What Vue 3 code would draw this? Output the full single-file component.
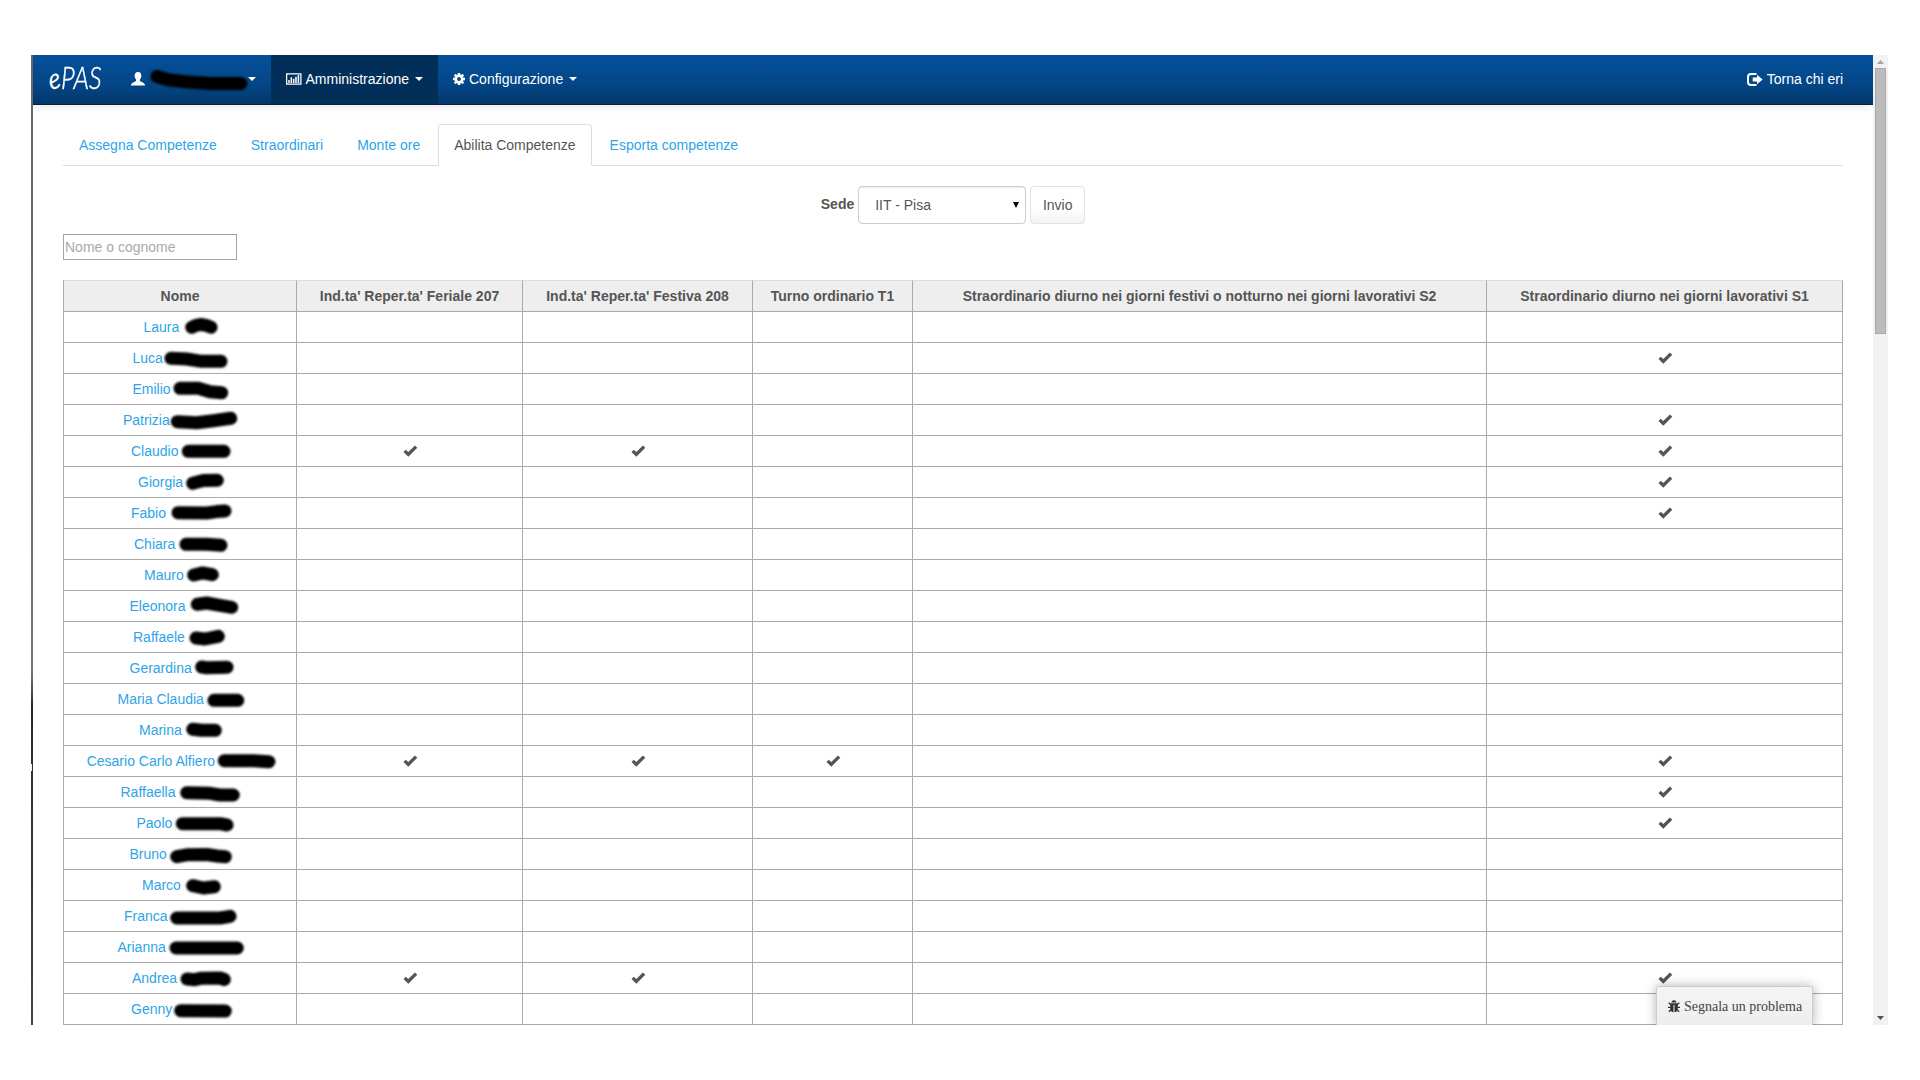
<script setup>
const tabs = ['Assegna Competenze', 'Straordinari', 'Monte ore', 'Abilita Competenze', 'Esporta competenze']

const columns = [
  { label: 'Nome', width: 233 },
  { label: "Ind.ta' Reper.ta' Feriale 207", width: 226 },
  { label: "Ind.ta' Reper.ta' Festiva 208", width: 230 },
  { label: 'Turno ordinario T1', width: 160 },
  { label: 'Straordinario diurno nei giorni festivi o notturno nei giorni lavorativi S2', width: 574 },
  { label: 'Straordinario diurno nei giorni lavorativi S1', width: 356 }
]

// name, indent of the name, marker stroke over the surname, enabled columns
const people = [
  ['Laura', 79.5, '127.7,15.3 132,13.3 137,12.5 142,13.3 147,15.3', []],
  ['Luca', 68.5, '107,15.3 122.7,16 137.7,18.3 157,18.3', [5]],
  ['Emilio', 68.5, '116,14.3 134.3,14.3 146,17.7 157.7,18.7', []],
  ['Patrizia', 59, '113.3,16.7 132.7,17.7 149.3,15.7 166.7,13.3', [5]],
  ['Claudio', 67, '124.3,15.3 160,15.3', [1, 2, 5]],
  ['Giorgia', 74, '128.7,16.3 139.3,13.5 153.3,13.3', [5]],
  ['Fabio', 67, '114,14.7 142.7,15 152.7,13.6 161,13', [5]],
  ['Chiara', 70, '122,15.3 142.7,15.3 157,16.3', []],
  ['Mauro', 80, '129.7,15 138.7,12.9 148.3,14.7', []],
  ['Eleonora', 65.500, '133.3,13.3 142.7,12 156,14.3 167.7,16.3', []],
  ['Raffaele', 69, '132,16 141,17 154.3,14.3', []],
  ['Gerardina', 65.500, '137.7,14 142.7,14.7 163,14.3', []],
  ['Maria Claudia', 53.500, '150,16.3 173.7,16.3', []],
  ['Marina', 75, '128.7,14.3 137.7,15.3 151.3,15.3', []],
  ['Cesario Carlo Alfiero', 22.700, '160.3,14.7 189.3,14.7 205,15.7', [1, 2, 3, 5]],
  ['Raffaella', 56.500, '122.7,15.7 146,16.3 156,18 169.3,18', [5]],
  ['Paolo', 72.500, '118.3,15.7 156,15.7 163,17', [5]],
  ['Bruno', 65.500, '112.7,17.7 122.7,15.8 142.7,15.5 152.7,17 161.3,17.7', []],
  ['Marco', 78, '128.7,15.7 139.3,18 150.3,16.7', []],
  ['Franca', 60, '112.7,17 156,17 166,15.3', []],
  ['Arianna', 53.500, '112,16 173.3,16', []],
  ['Andrea', 68, '123,16 131,16.7 137.7,15.2 156,15 160.3,16.5', [1, 2, 5]],
  ['Genny', 67, '116.7,16.7 161.3,17', []]
].map(([name, indent, stroke, enabled]) => ({ name, indent, stroke, enabled }))
</script>

<template>
  <div class="window">
    <div class="edge"><i></i></div>
    <div class="page">
      <nav class="navbar">
        <a class="brand"><span>e</span><b>PAS</b></a>
        <a class="nav-item user">
          <svg width="14" height="14" viewBox="0 0 14 14"><path fill="#fff" d="M7 0C9.500 0 10.500 1.700 10.300 4C10.200 5.800 9.600 6.600 9 7.400V9C9.800 10 14 10.400 14 13.500H0C0 10.400 4.200 10 5 9V7.400C4.400 6.600 3.800 5.800 3.700 4C3.500 1.700 4.500 0 7 0Z" /></svg>
          <span class="username"><svg width="104" height="24" viewBox="0 0 104 24"><polyline points="12,9.500 24,13 43,15 65,16.500 96,16.500" /></svg></span>
          <i class="caret"></i>
        </a>
        <a class="nav-item active">
          <svg class="chart" width="16" height="12" viewBox="0 0 16 12"><path fill="none" stroke="#fff" stroke-width="1.3" d="M.65.65h14.7v10.7H.65z" /><path fill="#fff" d="M2.3 7h1.5v3H2.3zM4.7 4.2h1.6V10H4.7zM7.2 5.8h1.5V10H7.2zM9.5 3.6h1.6V10H9.5zM12 2h1.6v8H12z" /></svg>
          <span>Amministrazione</span><i class="caret"></i>
        </a>
        <a class="nav-item">
          <svg class="gear" width="12" height="12" viewBox="0 0 12 12"><g fill="none" stroke="#fff"><circle cx="6" cy="6" r="3.2" stroke-width="2.6" /><path stroke-width="2.6" d="M6 0v2.3M6 9.700v2.3M0 6h2.300M9.700 6H12M1.700 1.700l1.700 1.700M8.600 8.600l1.700 1.700M10.300 1.700L8.600 3.400M3.400 8.600l-1.700 1.700" /></g></svg>
          <span>Configurazione</span><i class="caret"></i>
        </a>
        <a class="nav-item back">
          <svg width="16" height="13" viewBox="0 0 16 13"><path fill="none" stroke="#fff" stroke-width="2" d="M9.500 1H4Q1 1 1 4v5Q1 12 4 12h5.500" /><path fill="#fff" d="M5.700 4.500H10V1.700L15.600 6.500L10 11.300V8.500H5.700z" /></svg>
          <span>Torna chi eri</span>
        </a>
      </nav>

      <main class="content">
        <ul class="tabs">
          <li v-for="tab in tabs" :key="tab" :class="{ active: tab === 'Abilita Competenze' }">{{ tab }}</li>
        </ul>
        <form class="office" @submit.prevent>
          <label>Sede</label>
          <div class="select"><span>IIT - Pisa</span><svg width="6" height="6" viewBox="0 0 6 6"><path d="M0 0h6L3 6z" /></svg></div>
          <button type="submit">Invio</button>
        </form>
        <input class="search" placeholder="Nome o cognome" />
        <table>
          <colgroup><col v-for="c in columns" :key="c.label" :style="{ width: c.width + 'px' }" /></colgroup>
          <thead>
            <tr><th v-for="c in columns" :key="c.label">{{ c.label }}</th></tr>
          </thead>
          <tbody>
            <tr v-for="p in people" :key="p.name">
              <td class="name">
                <div>
                  <a :style="{ marginLeft: p.indent + 'px' }">{{ p.name }}</a>
                  <svg class="marker" width="232" height="30" viewBox="0 0 232 30"><polyline :points="p.stroke" /></svg>
                </div>
              </td>
              <td v-for="n in 5" :key="n">
                <svg v-if="p.enabled.includes(n)" class="check" width="15" height="12" viewBox="0 0 15 12"><path fill="#555" d="M.5 7L2.700 4.700L5.300 7L11.900.4L14.300 2.800L5.300 11.700z" /></svg>
              </td>
            </tr>
          </tbody>
        </table>
      </main>

      <div class="report">
        <svg width="12" height="13" viewBox="0 0 12 13"><path fill="#333" d="M3.300 2.600Q3.700.3 6 .3T8.700 2.600zM2.300 3.300h7.400V9Q9.500 12 6.500 12.300V5h-1v7.300Q2.500 12 2.300 9z" /><path fill="none" stroke="#333" stroke-width="1.300" d="M.6 2.800L3 4.800M11.400 2.800L9 4.800M0 7.300h3M12 7.300H9M.8 11.800l2.500-2.300M11.200 11.800L8.700 9.500" /></svg>
        <span>Segnala un problema</span>
      </div>
    </div>
    <div class="scrollbar">
      <svg width="7" height="4" viewBox="0 0 7 4"><path fill="#a3a3a3" d="M0 4L3.500 0L7 4z" /></svg>
      <div class="thumb"></div>
      <svg class="down" width="7" height="4" viewBox="0 0 7 4"><path fill="#505050" d="M0 0L3.500 4L7 0z" /></svg>
    </div>
  </div>
</template>

<style>
body {
  margin: 0;
  background: #fff;
}
</style>

<style scoped>
.window {
  box-sizing: border-box;
  display: flex;
  width: 1857px;
  height: 970px;
  margin: 55px 0 0 31px;
  font: 14px/20px "Liberation Sans", Arial, sans-serif;
  color: #555;
}
.edge {
  box-sizing: border-box;
  width: 2px;
  padding-top: 709px;
  background: linear-gradient(#666 0, #77736e 620px, #26292d 650px, #43444d 970px);
}
.edge i {
  display: block;
  width: 1px;
  height: 7px;
  background: #eee;
}
.page {
  position: relative;
  width: 1840px;
  overflow: hidden;
}
.navbar {
  box-sizing: border-box;
  display: flex;
  height: 50px;
  border-bottom: 1px solid #022241;
  background: linear-gradient(#04519b, #044687 60%, #033769);
  box-shadow: 0 1px 10px rgba(0, 0, 0, .1);
  color: #fff;
}
.brand {
  box-sizing: border-box;
  display: flex;
  align-items: baseline;
  width: 83px;
  padding-left: 14px;
  font-family: Lato, sans-serif;
  font-style: italic;
  line-height: 45px;
}
.brand span {
  font-size: 29px;
  font-weight: 400;
  transform: scaleX(.85) rotate(-14deg);
}
.brand b {
  font-size: 31px;
  font-weight: 300;
  -webkit-text-stroke: .4px #fff;
  transform: scaleX(.82);
  transform-origin: 0 50%;
}
.nav-item {
  box-sizing: border-box;
  display: flex;
  align-items: center;
  height: 48px;
  padding: 0 15px;
}
.nav-item.user {
  width: 155px;
}
.nav-item.active {
  width: 167px;
  height: 49px;
  padding-bottom: 1px;
  background: #022f5a;
}
.username {
  width: 104px;
  height: 24px;
  margin-right: -1px;
}
.username svg {
  display: block;
  overflow: visible;
}
.username polyline,
.marker polyline {
  fill: none;
  stroke: #000;
  stroke-width: 13px;
  stroke-linecap: round;
  stroke-linejoin: round;
  filter: blur(.9px);
}
.chart {
  margin-right: 4px;
}
.gear {
  margin-right: 4px;
}
.caret {
  margin-left: 6px;
  border: 4px solid transparent;
  border-top-color: #fff;
  border-bottom: 0;
}
.user .caret {
  margin-left: 0;
}
.back {
  margin-left: auto;
  padding-right: 30px;
}
.back svg {
  margin-right: 4px;
}
.content {
  padding: 19px 30px 0;
}
.tabs {
  display: flex;
  gap: 2px;
  height: 41px;
  margin: 0;
  padding: 0;
  border-bottom: 1px solid #ddd;
  list-style: none;
  color: #2fa4e7;
}
.tabs li {
  box-sizing: border-box;
  height: 42px;
  padding: 10px 15px;
  border: 1px solid transparent;
  border-radius: 4px 4px 0 0;
  white-space: nowrap;
}
.tabs .active {
  border-color: #ddd #ddd #fff;
  background: #fff;
  color: #555;
}
.office {
  display: flex;
  justify-content: center;
  gap: 4px;
  height: 38px;
  margin-top: 20px;
}
.office label {
  font-weight: bold;
  line-height: 37px;
}
.select {
  box-sizing: border-box;
  display: flex;
  align-items: center;
  justify-content: space-between;
  width: 168px;
  padding: 0 6px 0 16px;
  border: 1px solid #ccc;
  border-radius: 4px;
  box-shadow: inset 0 1px 1px rgba(0, 0, 0, .075);
}
.office button {
  box-sizing: border-box;
  width: 55px;
  padding: 0;
  border: 1px solid #e2e2e2;
  border-radius: 4px;
  background: linear-gradient(#fff, #fff 60%, #f2f2f2);
  font: inherit;
  color: #555;
}
.search {
  box-sizing: border-box;
  display: block;
  width: 174px;
  height: 26px;
  margin: 10px 0 20px;
  padding: 1px;
  border: 1px solid #a5a5a5;
  font: inherit;
}
.search::placeholder {
  color: #a9a9a9;
}
table {
  box-sizing: border-box;
  width: 1780px;
  table-layout: fixed;
  border-collapse: separate;
  border-spacing: 0;
  border-left: 1px solid #aaa;
}
th,
td {
  box-sizing: border-box;
  height: 31px;
  padding: 0;
  border-right: 1px solid #aaa;
  border-bottom: 1px solid #aaa;
  text-align: center;
  white-space: nowrap;
}
th {
  height: 32px;
  border-top: 1px solid #ddd;
  background: #eee;
}
.name div {
  position: relative;
  height: 30px;
  text-align: left;
  line-height: 30px;
}
.name a {
  color: #2fa4e7;
}
.marker {
  position: absolute;
  left: 0;
  top: 0;
}
td:not(.name) {
  padding: 0 0 1px 1px;
}
.check {
  display: block;
  margin: 0 auto;
}
.report {
  position: absolute;
  left: 1623px;
  top: 931px;
  box-sizing: border-box;
  display: flex;
  align-items: center;
  gap: 4px;
  width: 157px;
  height: 41px;
  padding-left: 11px;
  border: 1px solid #ccc;
  border-radius: 2px 2px 0 0;
  background: linear-gradient(#f4f4f4, #eee);
  box-shadow: 0 0 12px rgba(0, 0, 0, .3);
  font-family: "Liberation Serif", "Times New Roman", serif;
  color: #444;
}
.scrollbar {
  box-sizing: border-box;
  display: flex;
  flex-direction: column;
  align-items: center;
  width: 15px;
  padding: 5px 0;
  background: #f1f1f1;
}
.thumb {
  box-sizing: border-box;
  width: 11px;
  height: 266px;
  margin-top: 4px;
  border: 1px solid #a8a8a8;
  background: #bcbcbc;
}
.down {
  margin-top: auto;
}
</style>
